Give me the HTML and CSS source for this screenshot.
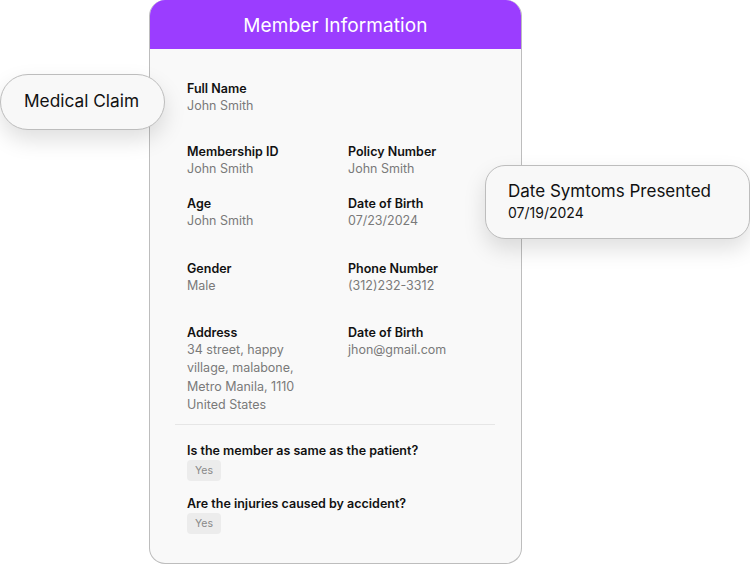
FILE: index.html
```html
<!DOCTYPE html>
<html lang="en">
<head>
  <meta charset="UTF-8">
  <meta name="viewport" content="width=device-width, initial-scale=1.0">
  <title>Member Information</title>
  <link rel="stylesheet" href="styles.css">
</head>
<body>
  <div class="stage">
    <div class="card">
      <div class="card-header">Member Information</div>
      <div class="card-body">
        <div class="fields">
          <div class="row row-first">
            <div class="field">
              <div class="label">Full Name</div>
              <div class="value">John Smith</div>
            </div>
          </div>
          <div class="row row-wide">
            <div class="field">
              <div class="label">Membership ID</div>
              <div class="value">John Smith</div>
            </div>
            <div class="field">
              <div class="label">Policy Number</div>
              <div class="value">John Smith</div>
            </div>
          </div>
          <div class="row row-tight">
            <div class="field">
              <div class="label">Age</div>
              <div class="value">John Smith</div>
            </div>
            <div class="field">
              <div class="label">Date of Birth</div>
              <div class="value">07/23/2024</div>
            </div>
          </div>
          <div class="row row-wider">
            <div class="field">
              <div class="label">Gender</div>
              <div class="value">Male</div>
            </div>
            <div class="field">
              <div class="label">Phone Number</div>
              <div class="value">(312)232-3312</div>
            </div>
          </div>
          <div class="row row-address">
            <div class="field">
              <div class="label">Address</div>
              <div class="value value-multi">34 street, happy<br>village, malabone,<br>Metro Manila, 1110<br>United States</div>
            </div>
            <div class="field">
              <div class="label">Date of Birth</div>
              <div class="value">jhon@gmail.com</div>
            </div>
          </div>
        </div>

        <hr class="divider">

        <div class="questions">
          <div class="question">
            <div class="label">Is the member as same as the patient?</div>
            <span class="chip">Yes</span>
          </div>
          <div class="question">
            <div class="label">Are the injuries caused by accident?</div>
            <span class="chip">Yes</span>
          </div>
        </div>
      </div>
    </div>

    <!-- pills floating over the card -->
    <div class="pill pill-claim">Medical Claim</div>
    <div class="pill pill-date">
      <div class="pill-title">Date Symtoms Presented</div>
      <div class="pill-sub">07/19/2024</div>
    </div>
  </div>
</body>
</html>
```

FILE: styles.css
```css
body {
  margin: 0;
  background: #fff;
  font-family: 'Inter', 'Open Sans', sans-serif;
  color: #111;
}
.stage {
  position: relative;
  width: 750px;
  height: 565px;
  overflow: hidden;
}
.card {
  margin-left: 149px;
  width: 371px;
  height: 563px;
  border: 1px solid #bdbdbd;
  border-top: none;
  border-radius: 16px;
  background: #f9f9f9;
  overflow: hidden;
}
.card-header {
  box-sizing: border-box;
  height: 49px;
  padding-top: 1px;
  background: #9b3dff;
  color: #fff;
  font-size: 19px;
  font-weight: 400;
  display: flex;
  align-items: center;
  justify-content: center;
  letter-spacing: 0.1px;
}
.card-body {
  padding: 0 26px 0 25px;
}
.fields {
  padding: 31px 0 0 12px;
}
.row {
  display: grid;
  grid-template-columns: 161px 1fr;
}
.row-wide {
  margin-top: 28px;
}
.row-wider {
  margin-top: 30px;
}
.row-address {
  margin-top: 29px;
}
.row-tight {
  margin-top: 17px;
}
.label {
  font-size: 12.5px;
  font-weight: 600;
  line-height: 17px;
  color: #111;
}
.value {
  font-size: 12.5px;
  line-height: 18px;
  color: #7a7a7a;
}
.value-multi {
  line-height: 18.3px;
}
.divider {
  margin: 10px 0 0;
  border: none;
  border-top: 1px solid #e6e6e6;
}
.questions {
  padding: 17px 0 0 12px;
}
.question + .question {
  margin-top: 14px;
}
.question .label {
  margin-bottom: 1px;
}
.chip {
  display: block;
  width: fit-content;
  height: 21px;
  line-height: 21px;
  padding: 0 8px;
  background: #ececec;
  border-radius: 4px;
  font-size: 10.5px;
  color: #888;
}
.pill {
  position: absolute;
  box-sizing: border-box;
  background: #f8f8f8;
  border: 1px solid #bdbdbd;
  box-shadow: 0 10px 22px rgba(0, 0, 0, 0.13);
  color: #111;
}
.pill-claim {
  left: 0;
  top: 74px;
  width: 165px;
  height: 56px;
  border-radius: 28px;
  padding: 0 0 4px 23px;
  display: flex;
  align-items: center;
  font-size: 17.3px;
}
.pill-date {
  left: 485px;
  top: 165px;
  width: 265px;
  height: 74px;
  border-radius: 20px;
  padding: 14px 0 0 22px;
}
.pill-title {
  font-size: 17px;
  line-height: 22px;
}
.pill-sub {
  font-size: 14px;
  line-height: 20px;
  margin-top: 1px;
}
```
